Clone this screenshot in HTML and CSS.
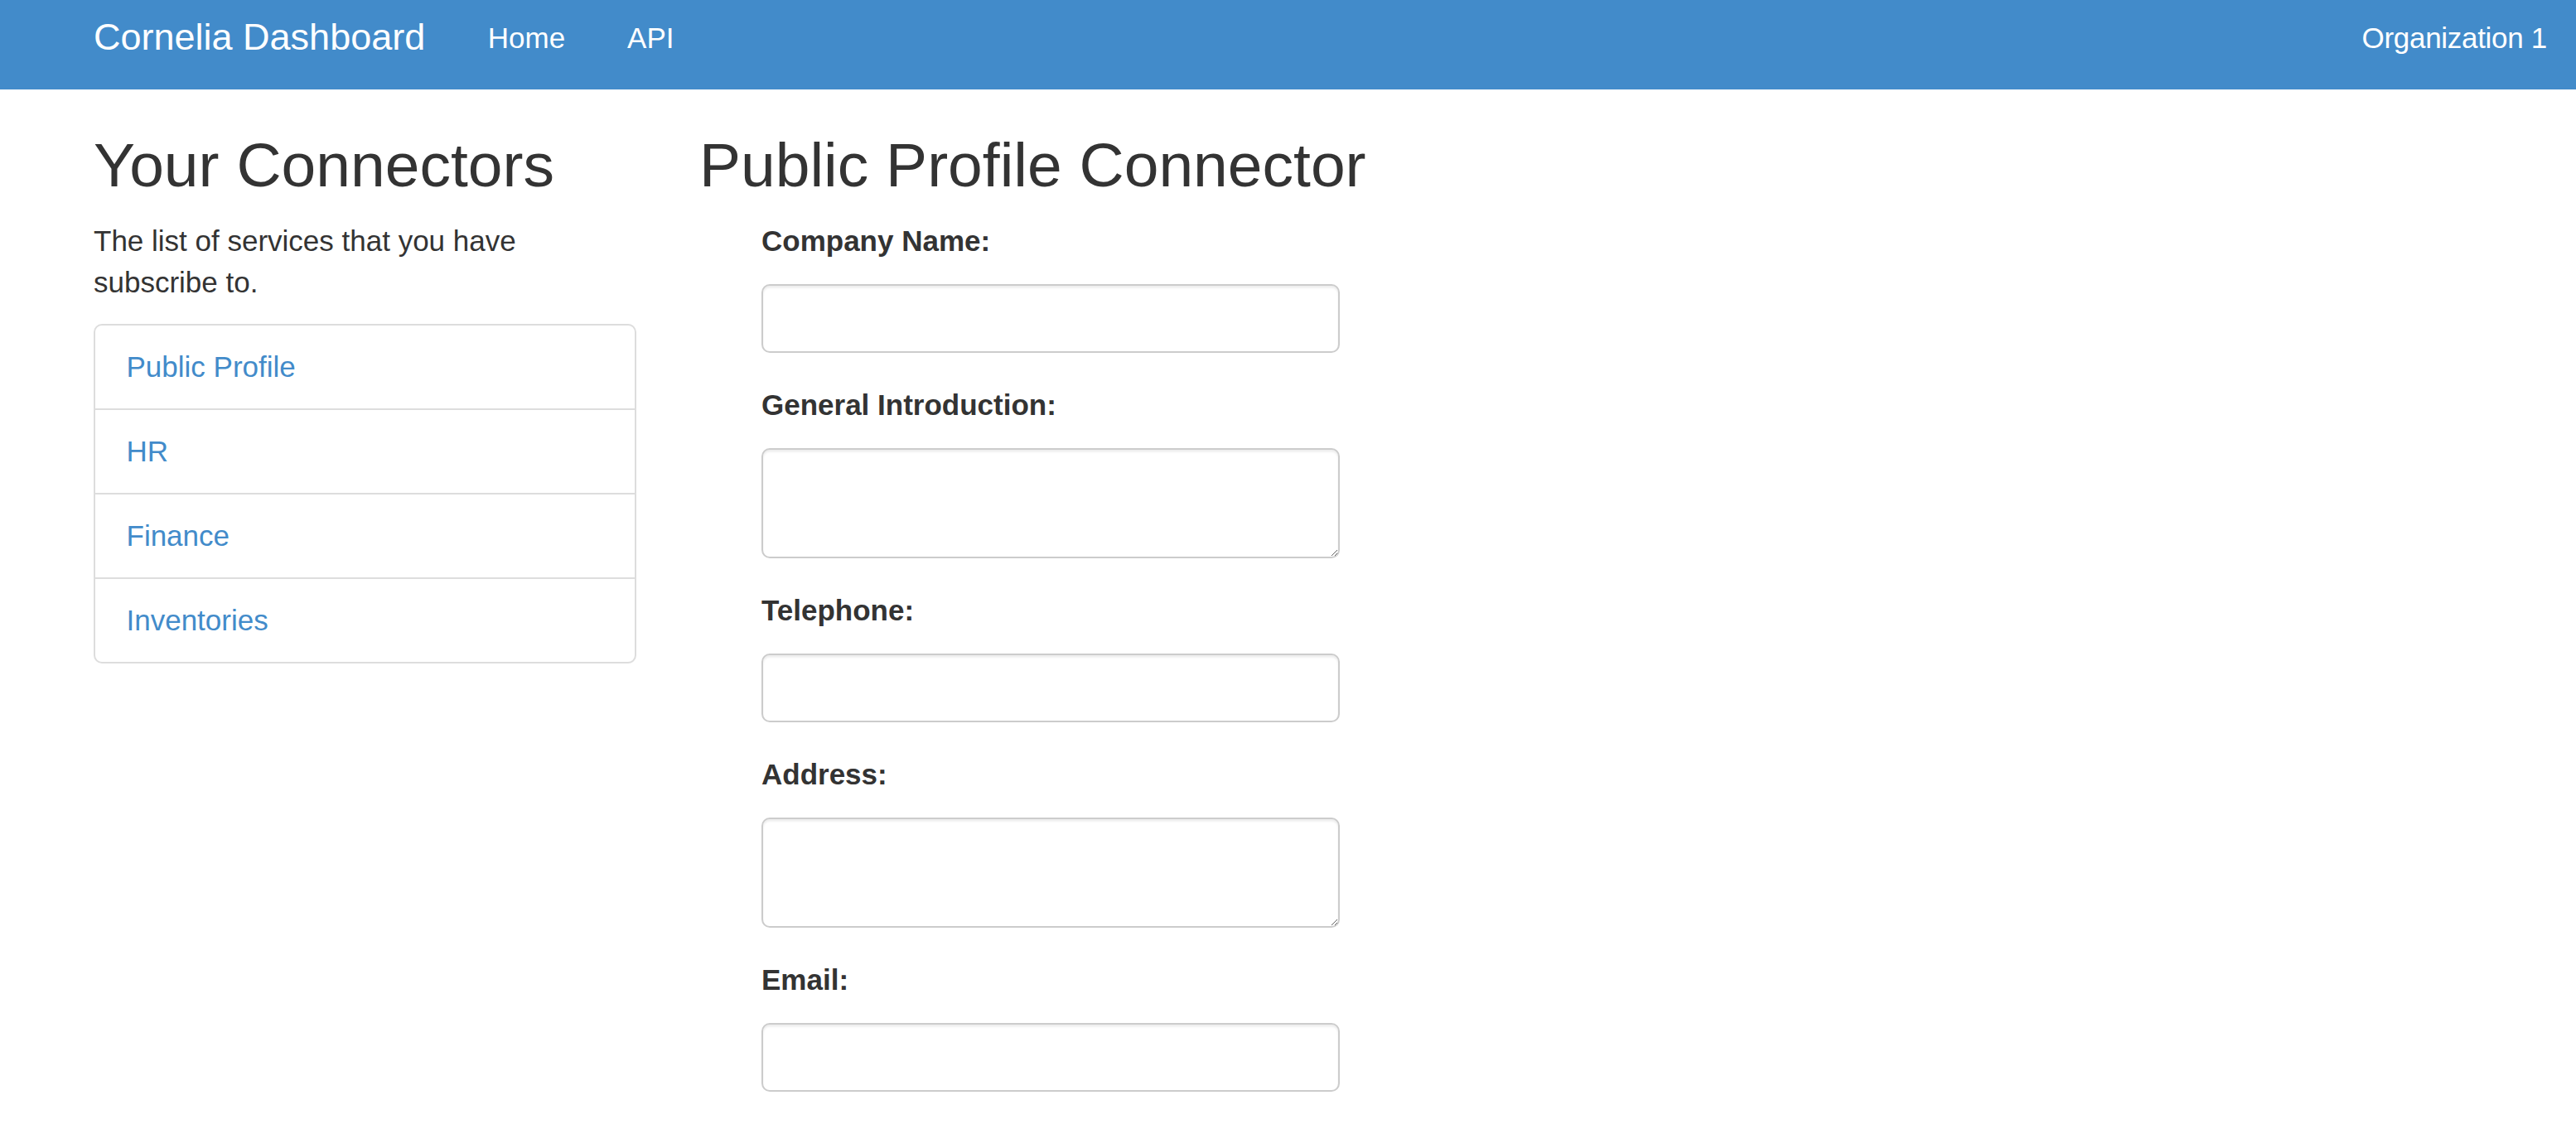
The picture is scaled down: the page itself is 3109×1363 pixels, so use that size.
FILE: index.html
```html
<!DOCTYPE html>
<html lang="en">
<head>
<meta charset="utf-8">
<title>Cornelia Dashboard</title>
<link rel="stylesheet" href="styles.css">
</head>
<body>
<nav class="navbar">
  <a class="brand" href="#">Cornelia Dashboard</a>
  <ul class="nav-links">
    <li><a href="#">Home</a></li>
    <li><a href="#">API</a></li>
  </ul>
  <div class="nav-right"><a href="#">Organization 1</a></div>
</nav>
<main class="layout">
  <aside class="sidebar">
    <h2 class="title">Your Connectors</h2>
    <p class="lead-text">The list of services that you have subscribe to.</p>
    <div class="list-group">
      <a class="list-item" href="#">Public Profile</a>
      <a class="list-item" href="#">HR</a>
      <a class="list-item" href="#">Finance</a>
      <a class="list-item" href="#">Inventories</a>
    </div>
  </aside>
  <section class="content">
    <h2 class="title">Public Profile Connector</h2>
    <form class="profile-form">
      <div class="form-group">
        <label class="field-label" for="company">Company Name:</label>
        <input class="field-input" id="company" type="text">
      </div>
      <div class="form-group">
        <label class="field-label" for="intro">General Introduction:</label>
        <textarea class="field-input field-area" id="intro"></textarea>
      </div>
      <div class="form-group">
        <label class="field-label" for="phone">Telephone:</label>
        <input class="field-input" id="phone" type="text">
      </div>
      <div class="form-group">
        <label class="field-label" for="address">Address:</label>
        <textarea class="field-input field-area" id="address"></textarea>
      </div>
      <div class="form-group">
        <label class="field-label" for="email">Email:</label>
        <input class="field-input" id="email" type="text">
      </div>
    </form>
  </section>
</main>
</body>
</html>
```

FILE: styles.css
```css
* { box-sizing: border-box; }

html, body {
  margin: 0;
  padding: 0;
  background: #fff;
}

body {
  font-family: "Liberation Sans", Arial, Helvetica, sans-serif;
  font-size: 35px;
  line-height: 50px;
  color: #333;
}

a { text-decoration: none; }

.navbar {
  display: flex;
  align-items: flex-start;
  height: 108px;
  padding: 20px 35px 0 113px;
  background: #428bca;
}

.brand {
  font-size: 45px;
  line-height: 50px;
  color: #fff;
  margin-right: 38px;
}

.nav-links {
  display: flex;
  list-style: none;
  margin: 1px 0 0 0;
  padding: 0;
}

.nav-links a {
  display: block;
  padding: 0 37.5px;
  color: #fff;
  line-height: 50px;
}

.nav-right {
  margin-left: auto;
  margin-top: 1px;
}

.nav-right a {
  color: #fff;
  line-height: 50px;
  letter-spacing: -0.3px;
}

.layout {
  display: grid;
  grid-template-columns: 655px 1fr;
  column-gap: 76px;
  padding: 50px 37px 0 113px;
}

.title {
  font-size: 75px;
  line-height: 82.5px;
  font-weight: 400;
  margin: 0 0 25px 0;
  color: #333;
}

.lead-text {
  margin: 0 0 25px 0;
}

.list-group {
  border: 2px solid #ddd;
  border-radius: 10px;
  overflow: hidden;
}

.list-item {
  display: block;
  padding: 25px 37.5px;
  line-height: 50px;
  color: #428bca;
  border-top: 2px solid #ddd;
}

.list-item:first-child { border-top: 0; }

.profile-form {
  padding-left: 75px;
}

.form-group {
  margin-bottom: 38px;
}

.field-label {
  display: block;
  font-weight: 700;
  line-height: 50px;
  margin-bottom: 27px;
}

.field-input {
  display: block;
  width: 698px;
  height: 83px;
  margin: 0;
  padding: 15px 30px;
  font: inherit;
  color: #555;
  background: #fff;
  border: 2px solid #ccc;
  border-radius: 10px;
  box-shadow: inset 0 2.5px 2.5px rgba(0, 0, 0, 0.075);
  outline: none;
}

.field-area {
  height: 133px;
  resize: vertical;
}
```
